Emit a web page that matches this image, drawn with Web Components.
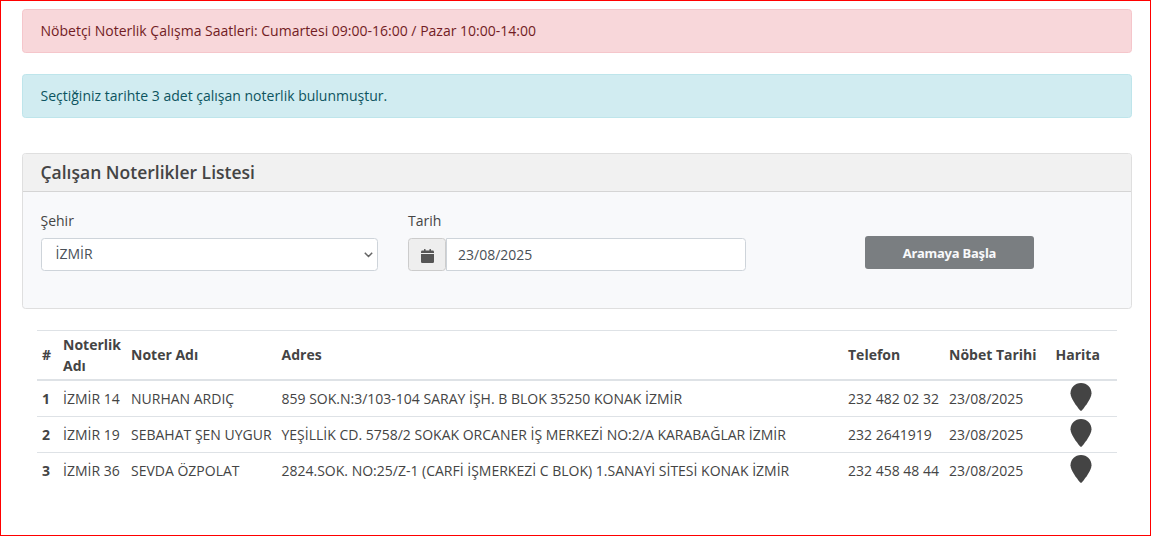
<!DOCTYPE html>
<html lang="tr">
<head>
<meta charset="utf-8">
<title>Nöbetçi Noterlikler</title>
<style>
html{height:100%;}
body{
    margin:0;height:100%;box-sizing:border-box;overflow:hidden;
    border:1px solid #f00;background:#fff;color:#444;
    font:14px/21px "Open Sans","Noto Sans",sans-serif;
}
</style>
</head>
<body>
<noter-page>
    <alert-box type="danger">Nöbetçi Noterlik Çalışma Saatleri: Cumartesi 09:00-16:00 / Pazar 10:00-14:00</alert-box>
    <alert-box type="info">Seçtiğiniz tarihte 3 adet çalışan noterlik bulunmuştur.</alert-box>
    <search-card>
        <span slot="title">Çalışan Noterlikler Listesi</span>
        <city-select label="Şehir">İZMİR</city-select>
        <date-field label="Tarih">23/08/2025</date-field>
        <search-button>Aramaya Başla</search-button>
    </search-card>
    <noter-table></noter-table>
</noter-page>

<script>
function define(name, html, init) {
    let template = document.createElement('template');
    template.innerHTML = html;
    customElements.define(name, class extends HTMLElement {
        constructor() {
            super();
            this._sd = this.attachShadow({ mode: "open" });
            this._sd.appendChild(template.content.cloneNode(true));
        }
        connectedCallback() {
            if (init) init(this, this._sd);
        }
    });
}

// label text from the attribute
function setLabel(el, sd) {
    sd.querySelector('.label').textContent = el.getAttribute('label');
}

define('noter-page', `
<style>
:host{display:block;padding:8px 18px 0 21px;}
</style>
<slot></slot>
`);

define('alert-box', `
<style>
:host{
    display:block;box-sizing:border-box;height:44px;margin-bottom:21px;
    padding:10px 17.5px;border:1px solid #bee5eb;border-radius:3.5px;
    background:#d1ecf1;color:#0c5460;
}
:host([type="danger"]){border-color:#f5c6cb;background:#f8d7da;color:#721c24;}
</style>
<slot></slot>
`);

define('search-card', `
<style>
:host{
    display:block;box-sizing:border-box;height:156px;margin:35px 0 21px;
    border:1px solid #dfdfdf;border-radius:3.5px;background:#f8f9fb;
}
header{
    box-sizing:border-box;height:38px;padding:0 17.5px;line-height:37px;
    border-bottom:1px solid #d5d5d5;background:#f1f1f1;border-radius:3px 3px 0 0;
    font-size:17.5px;font-weight:600;
}
.body{display:flex;align-items:flex-start;padding:18px 18px 0 17.5px;}
</style>
<header><slot name="title"></slot></header>
<div class="body"><slot></slot></div>
`);

define('city-select', `
<style>
:host{display:block;width:337.5px;margin-right:30px;}
.label{display:block;margin-bottom:7px;}
.box{
    display:flex;align-items:center;justify-content:space-between;
    box-sizing:border-box;height:33px;padding:0 4px 2px 14px;
    border:1px solid #ced4da;border-radius:3.5px;background:#fff;color:#495057;
}
svg{display:block;margin-top:2px;}
</style>
<span class="label"></span>
<div class="box">
    <slot></slot>
    <svg width="9" height="6" viewBox="0 0 9 6"><path d="M.8 .8 4.5 4.5 8.2 .8" fill="none" stroke="#666" stroke-width="1.5"/></svg>
</div>
`, setLabel);

define('date-field', `
<style>
:host{display:block;width:338px;margin-right:119px;}
.label{display:block;margin-bottom:7px;}
.group{display:flex;height:33px;}
.addon{
    display:flex;align-items:center;justify-content:center;
    box-sizing:border-box;width:38px;border:1px solid #ccc;border-radius:3.5px;background:#eee;
}
.input{
    flex:1;display:flex;align-items:center;padding-left:11px;
    border:1px solid #ced4da;border-radius:0 3.5px 3.5px 0;background:#fff;color:#495057;
}
svg{display:block;margin:2px 0 0 1px;}
</style>
<span class="label"></span>
<div class="group">
    <div class="addon">
        <svg width="13" height="14" viewBox="0 0 13 14" fill="#555"><path d="M0 4V3Q0 1.6 1.4 1.6H3V.4Q3 0 3.4 0H4.2Q4.6 0 4.6 .4V1.6H8.4V.4Q8.4 0 8.8 0H9.6Q10 0 10 .4V1.6H11.6Q13 1.6 13 3V4ZM0 5H13V12.7Q13 14 11.7 14H1.3Q0 14 0 12.7Z"/></svg>
    </div>
    <div class="input"><slot></slot></div>
</div>
`, setLabel);

define('search-button', `
<style>
:host{display:block;padding-top:26px;}
button{
    display:block;width:169px;height:33px;padding:1px 0 0;border:0;border-radius:3px;
    background:#7a7e81;color:#f8f9fb;letter-spacing:-.2px;
    font:bold 13px/21px "Noto Sans","Open Sans",sans-serif;
}
</style>
<button type="button"><slot></slot></button>
`);

define('map-pin', `
<style>
:host{display:block;}
svg{display:block;margin:0 auto;}
</style>
<svg width="22" height="28" viewBox="0 0 22 28"><path d="M11 0C17 0 21.5 4.4 21.5 10.3C21.5 15.2 15.8 22.7 12 27.3Q11 28.4 10 27.3C6.2 22.7 .5 15.2 .5 10.3C.5 4.4 5 0 11 0Z" fill="#444"/></svg>
`);

define('noter-row', `
<style>
:host{
    display:grid;grid-template-columns:21px 68px 150.5px 566.5px 101px 102px 70px;align-items:center;
    box-sizing:border-box;height:36px;border-top:1px solid #dee2e6;white-space:nowrap;
}
:host([first]){height:35px;border-top:0;}
:host([head]){height:51px;border-bottom:2px solid #dee2e6;font-weight:bold;}
::slotted(span){padding-left:5px;}
::slotted(span:first-child){font-weight:bold;}
::slotted(map-pin){margin-bottom:3px;}
:host([head]) ::slotted(span){padding-bottom:1px;}
:host([head]) ::slotted(span:nth-child(2)){white-space:normal;padding-bottom:0;}
:host([head]) ::slotted(span:last-child){padding-left:9.5px;}
</style>
<slot></slot>
`);

const heads = ['#', 'Noterlik Adı', 'Noter Adı', 'Adres', 'Telefon', 'Nöbet Tarihi', 'Harita'];
const rows = [
    ['1', 'İZMİR 14', 'NURHAN ARDIÇ', '859 SOK.N:3/103-104 SARAY İŞH. B BLOK 35250 KONAK İZMİR', '232 482 02 32', '23/08/2025'],
    ['2', 'İZMİR 19', 'SEBAHAT ŞEN UYGUR', 'YEŞİLLİK CD. 5758/2 SOKAK ORCANER İŞ MERKEZİ NO:2/A KARABAĞLAR İZMİR', '232 2641919', '23/08/2025'],
    ['3', 'İZMİR 36', 'SEVDA ÖZPOLAT', '2824.SOK. NO:25/Z-1 (CARFİ İŞMERKEZİ C BLOK) 1.SANAYİ SİTESİ KONAK İZMİR', '232 458 48 44', '23/08/2025']
];

define('noter-table', `
<style>
:host{display:block;width:1080px;margin-left:15px;}
</style>
`, (el, sd) => {
    const cells = list => list.map(t => `<span>${t}</span>`).join('');
    let html = `<noter-row head>${cells(heads)}</noter-row>`;
    rows.forEach((r, i) => {
        html += `<noter-row${i ? '' : ' first'}>${cells(r)}<map-pin></map-pin></noter-row>`;
    });
    sd.innerHTML += html;
});
</script>
</body>
</html>
